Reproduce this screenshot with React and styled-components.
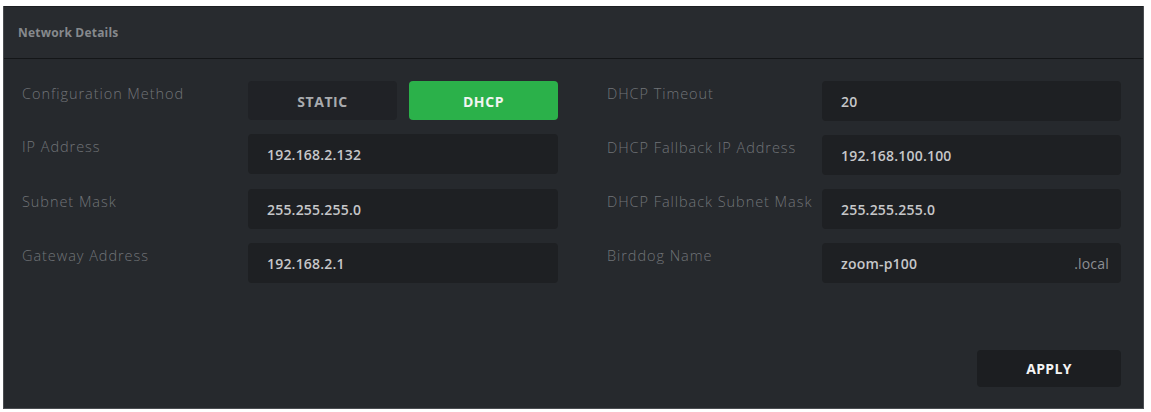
import React, { useState } from 'react'
import styled, { createGlobalStyle } from 'styled-components'

const GlobalStyle = createGlobalStyle`
  html, body {
    margin: 0;
    padding: 0;
    background: #ffffff;
  }
  body {
    font-family: "Open Sans", "Liberation Sans", sans-serif;
  }
`

const Page = styled.div`
  padding: 6px 7px 3px 3px;
  height: 412px;
  box-sizing: border-box;
`

const Panel = styled.section`
  height: 100%;
  box-sizing: border-box;
  background: #26292d;
  border: 1px solid #4a4d51;
  border-top: none;
  display: flex;
  flex-direction: column;
`

const PanelHeader = styled.header`
  height: 53px;
  box-sizing: border-box;
  padding: 0 14px;
  display: flex;
  align-items: center;
  background: #282b2f;
  border-top: 1px solid #1d1f22;
  border-bottom: 1px solid #141618;
  font-size: 12px;
  font-weight: 700;
  color: #86898d;
  letter-spacing: 0.2px;
`

const PanelBody = styled.div`
  flex: 1;
  display: flex;
  flex-direction: column;
  padding: 22px 22px 20px 18px;
`

const Columns = styled.div`
  display: flex;
  gap: 49px;
`

const Column = styled.div`
  display: grid;
  grid-template-columns: ${p => p.$labelWidth}px ${p => p.$fieldWidth}px;
  row-gap: 14px;
  align-items: start;
`

const Label = styled.div`
  padding-top: 3px;
  font-size: 14.5px;
  line-height: 19px;
  font-weight: 300;
  color: #717478;
  letter-spacing: 0.95px;
  white-space: nowrap;
`

const Field = styled.div`
  height: 40px;
  box-sizing: border-box;
  padding: 1px 12px 0 19px;
  display: flex;
  align-items: center;
  justify-content: space-between;
  background: #1e2023;
  border-radius: 4px;
  font-size: 14px;
  font-weight: 600;
  letter-spacing: 0.2px;
  color: #c6c7c9;
`

const Suffix = styled.span`
  font-weight: 400;
  color: #8c8f93;
`

const Toggle = styled.div`
  display: grid;
  grid-template-columns: 1fr 1fr;
  gap: 12px;
  height: 39px;
`

const ToggleButton = styled.button`
  border: none;
  border-radius: 4px;
  font-family: inherit;
  font-size: 14px;
  font-weight: 700;
  letter-spacing: 0.6px;
  cursor: pointer;
  background: ${p => (p.$active ? '#2bb14a' : '#202226')};
  color: ${p => (p.$active ? '#f2f5f2' : '#a9abae')};
  padding-top: 2px;
`

const Footer = styled.div`
  margin-top: auto;
  display: flex;
  justify-content: flex-end;
`

const ApplyButton = styled.button`
  width: 144px;
  height: 37px;
  margin-bottom: 1px;
  border: none;
  border-radius: 4px;
  background: #1c1e21;
  color: #f4f4f4;
  font-family: inherit;
  font-size: 14px;
  font-weight: 700;
  letter-spacing: 0.3px;
  cursor: pointer;
`

const leftRows = [
  { label: 'IP Address', value: '192.168.2.132' },
  { label: 'Subnet Mask', value: '255.255.255.0' },
  { label: 'Gateway Address', value: '192.168.2.1' },
]

const rightRows = [
  { label: 'DHCP Timeout', value: '20' },
  { label: 'DHCP Fallback IP Address', value: '192.168.100.100' },
  { label: 'DHCP Fallback Subnet Mask', value: '255.255.255.0' },
  { label: 'Birddog Name', value: 'zoom-p100', suffix: '.local' },
]

export default function App() {
  const [method, setMethod] = useState('DHCP')

  return (
    <>
      <GlobalStyle />
      <Page>
        <Panel>
          <PanelHeader>Network Details</PanelHeader>
          <PanelBody>
            <Columns>
              <Column $labelWidth={226} $fieldWidth={310}>
                <Label>Configuration Method</Label>
                <Toggle>
                  {['STATIC', 'DHCP'].map(m => (
                    <ToggleButton key={m} $active={method === m} onClick={() => setMethod(m)}>
                      {m}
                    </ToggleButton>
                  ))}
                </Toggle>
                {leftRows.map(row => (
                  <React.Fragment key={row.label}>
                    <Label>{row.label}</Label>
                    <Field>{row.value}</Field>
                  </React.Fragment>
                ))}
              </Column>
              <Column $labelWidth={215} $fieldWidth={299}>
                {rightRows.map(row => (
                  <React.Fragment key={row.label}>
                    <Label>{row.label}</Label>
                    <Field>
                      <span>{row.value}</span>
                      {row.suffix && <Suffix>{row.suffix}</Suffix>}
                    </Field>
                  </React.Fragment>
                ))}
              </Column>
            </Columns>
            <Footer>
              <ApplyButton>APPLY</ApplyButton>
            </Footer>
          </PanelBody>
        </Panel>
      </Page>
    </>
  )
}
